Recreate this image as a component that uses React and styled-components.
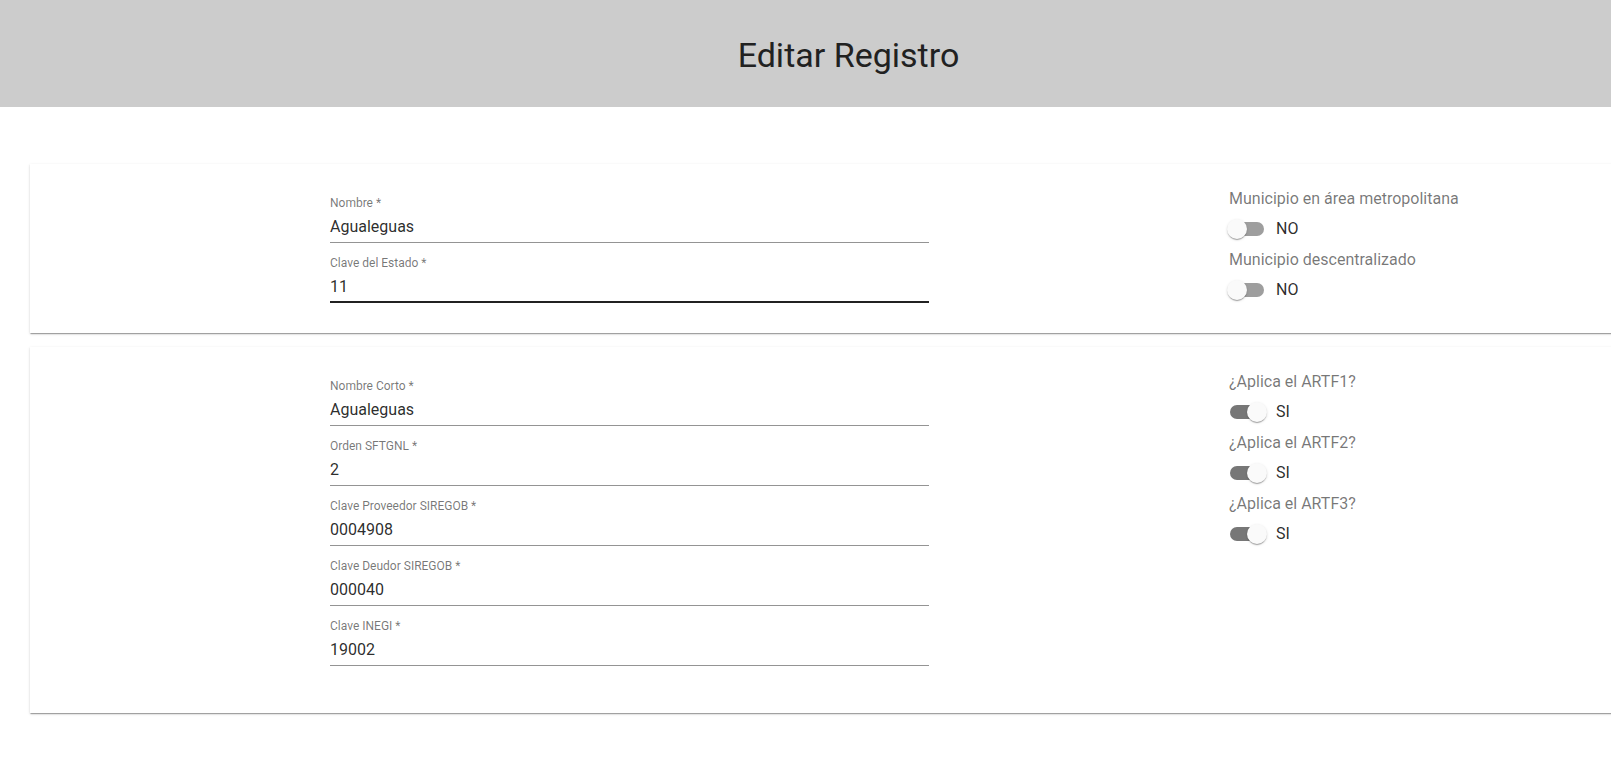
import React from "react";
import styled, { createGlobalStyle } from "styled-components";

const GlobalStyle = createGlobalStyle`
  html, body {
    margin: 0;
    padding: 0;
    background: #ffffff;
    overflow-x: hidden;
  }
  body {
    font-family: Roboto, "Liberation Sans", Arial, sans-serif;
    color: rgba(0, 0, 0, 0.87);
  }
  * { box-sizing: border-box; }
`;

const Page = styled.div`
  width: 1697px;
`;

const Header = styled.header`
  height: 107px;
  padding-top: 3px;
  background: #cccccc;
  display: flex;
  align-items: center;
  justify-content: center;
`;

const Title = styled.h1`
  margin: 0;
  font-size: 34px;
  font-weight: 400;
  line-height: normal;
  color: #212121;
`;

const Main = styled.main`
  padding: 57px 30px 40px;
  display: flex;
  flex-direction: column;
  gap: 14px;
`;

const Card = styled.section`
  background: #fff;
  box-shadow: 0px 2px 1px -1px rgba(0, 0, 0, 0.2),
    0px 1px 1px 0px rgba(0, 0, 0, 0.14), 0px 1px 3px 0px rgba(0, 0, 0, 0.12);
  padding: 23px 0 ${(p) => p.$padBottom || 24}px 300px;
  display: grid;
  grid-template-columns: 599px 1fr;
  column-gap: 300px;
  align-items: start;
`;

const FieldColumn = styled.div`
  display: flex;
  flex-direction: column;
  padding-top: 8px;
`;

const Field = styled.div`
  display: flex;
  flex-direction: column;
  height: 48px;
  margin-bottom: 12px;
  &:last-child {
    margin-bottom: 4px;
  }
`;

const Label = styled.label`
  display: block;
  height: 16px;
  padding-top: 1.5px;
  font-size: 12px;
  line-height: 12px;
  color: rgba(0, 0, 0, 0.54);
`;

const InputBox = styled.div`
  height: 32px;
  padding: 6px 0 ${(p) => (p.$focused ? 5 : 6)}px;
  border-bottom: ${(p) =>
    p.$focused ? "2px solid #212121" : "1px solid rgba(0, 0, 0, 0.42)"};
  font-size: 16px;
  line-height: 19px;
  color: rgba(0, 0, 0, 0.84);
`;

const ToggleColumn = styled.div`
  display: flex;
  flex-direction: column;
`;

const ToggleTitle = styled.div`
  font-size: 16px;
  line-height: 23px;
  color: rgba(0, 0, 0, 0.54);
  white-space: nowrap;
`;

const ToggleRow = styled.div`
  display: flex;
  align-items: center;
  height: 38px;
  margin-left: -11px;
`;

const SwitchRoot = styled.span`
  position: relative;
  display: inline-flex;
  width: 58px;
  height: 38px;
  padding: 12px;
  flex-shrink: 0;
`;

const Track = styled.span`
  width: 34px;
  height: 14px;
  border-radius: 7px;
  background: ${(p) => (p.$on ? "#777777" : "#9e9e9e")};
`;

const Thumb = styled.span`
  position: absolute;
  top: 9px;
  left: ${(p) => (p.$on ? 29 : 9)}px;
  width: 20px;
  height: 20px;
  border-radius: 50%;
  background: #fafafa;
  box-shadow: 0px 2px 1px -1px rgba(0, 0, 0, 0.2),
    0px 1px 1px 0px rgba(0, 0, 0, 0.14), 0px 1px 3px 0px rgba(0, 0, 0, 0.12);
`;

const ToggleLabel = styled.span`
  font-size: 16px;
  line-height: 24px;
  color: rgba(0, 0, 0, 0.84);
`;

const TextField = ({ label, value, focused }) => (
  <Field>
    <Label>{label}</Label>
    <InputBox $focused={focused}>{value}</InputBox>
  </Field>
);

const Toggle = ({ title, on }) => (
  <>
    <ToggleTitle>{title}</ToggleTitle>
    <ToggleRow>
      <SwitchRoot>
        <Track $on={on} />
        <Thumb $on={on} />
      </SwitchRoot>
      <ToggleLabel>{on ? "SI" : "NO"}</ToggleLabel>
    </ToggleRow>
  </>
);

export default function App() {
  return (
    <>
      <GlobalStyle />
      <Page>
        <Header>
          <Title>Editar Registro</Title>
        </Header>
        <Main>
          <Card>
            <FieldColumn>
              <TextField label="Nombre *" value="Agualeguas" />
              <TextField label="Clave del Estado *" value="11" focused />
            </FieldColumn>
            <ToggleColumn>
              <Toggle title="Municipio en área metropolitana" on={false} />
              <Toggle title="Municipio descentralizado" on={false} />
            </ToggleColumn>
          </Card>
          <Card $padBottom={43}>
            <FieldColumn>
              <TextField label="Nombre Corto *" value="Agualeguas" />
              <TextField label="Orden SFTGNL *" value="2" />
              <TextField label="Clave Proveedor SIREGOB *" value="0004908" />
              <TextField label="Clave Deudor SIREGOB *" value="000040" />
              <TextField label="Clave INEGI *" value="19002" />
            </FieldColumn>
            <ToggleColumn>
              <Toggle title="¿Aplica el ARTF1?" on />
              <Toggle title="¿Aplica el ARTF2?" on />
              <Toggle title="¿Aplica el ARTF3?" on />
            </ToggleColumn>
          </Card>
        </Main>
      </Page>
    </>
  );
}
